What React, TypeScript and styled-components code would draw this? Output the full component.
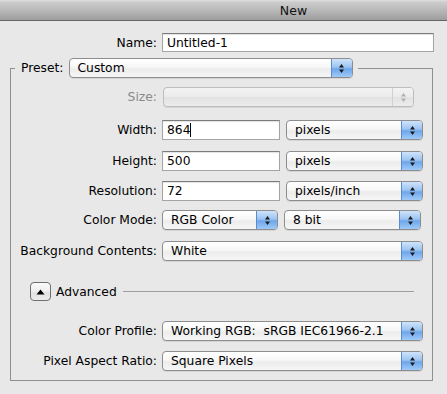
import React from 'react';
import styled, { createGlobalStyle } from 'styled-components';

const GlobalStyle = createGlobalStyle`
    html, body {
        margin: 0;
        padding: 0;
        background: #e8e8e8;
    }
    body {
        font-family: 'DejaVu Sans', 'Liberation Sans', sans-serif;
        font-size: 12.3px;
        color: #000;
    }
`;

const Dialog = styled.div`
    width: 447px;
    height: 394px;
    background: #e8e8e8;
    overflow: hidden;
`;

const TitleBar = styled.div`
    height: 21px;
    border-bottom: 1px solid #666;
    background: linear-gradient(to bottom, #e0e0e0 0px, #cdcdcd 2px, #b4b4b4 60%, #9d9d9d 100%);
    display: flex;
    align-items: center;
    justify-content: center;
    padding-left: 140px;
    box-sizing: border-box;
    font-size: 12.5px;
    color: #111;
`;

const Row = styled.div<{ $mt: number }>`
    display: flex;
    align-items: center;
    height: 20px;
    margin-top: ${p => p.$mt}px;
`;

const Label = styled.div<{ $w: number; $disabled?: boolean }>`
    width: ${p => p.$w}px;
    margin-right: 5px;
    text-align: right;
    white-space: nowrap;
    color: ${p => (p.$disabled ? '#8a8a8a' : '#000')};
`;

const TextField = styled.div<{ $w: number }>`
    width: ${p => p.$w}px;
    height: 20px;
    box-sizing: border-box;
    background: #fff;
    border: 1px solid #a4a4a4;
    border-top-color: #7c7c7c;
    box-shadow: inset 0 1px 1px rgba(0, 0, 0, 0.12);
    padding-left: 4px;
    display: flex;
    align-items: center;
`;

const Caret = styled.span`
    display: inline-block;
    width: 1px;
    height: 14px;
    background: #000;
`;

const Popup = styled.div<{ $w: number; $disabled?: boolean }>`
    width: ${p => p.$w}px;
    height: 20px;
    box-sizing: border-box;
    display: flex;
    border: 1px solid ${p => (p.$disabled ? '#bdbdbd' : '#8d8d8d')};
    border-radius: 4px;
    background: ${p =>
        p.$disabled
            ? 'linear-gradient(to bottom, #f3f3f3, #ebebeb 50%, #e2e2e2 51%, #ececec)'
            : 'linear-gradient(to bottom, #ffffff, #f7f7f7 45%, #ececec 55%, #f6f6f6)'};
    box-shadow: 0 1px 0 rgba(0, 0, 0, 0.08);
    overflow: hidden;
    margin-left: ${p => (p.$disabled ? 1 : 0)}px;
`;

const PopupText = styled.div`
    flex: 1;
    padding-left: 8px;
    display: flex;
    align-items: center;
    white-space: pre;
    overflow: hidden;
`;

const Stepper = styled.div<{ $disabled?: boolean }>`
    width: 20px;
    display: flex;
    align-items: center;
    justify-content: center;
    border-left: 1px solid ${p => (p.$disabled ? '#d0d0d0' : '#5d8bd0')};
    background: ${p =>
        p.$disabled
            ? 'linear-gradient(to bottom, #f3f3f3, #ebebeb 50%, #e2e2e2 51%, #ececec)'
            : 'linear-gradient(to bottom, #cfe3fa, #9cc4f2 45%, #6ea6ea 55%, #9fcaf8)'};
`;

const Fieldset = styled.fieldset`
    margin: 6px 14px 0 10px;
    padding: 0;
    border: 1px solid #8f8f8f;
    min-width: 0;
`;

const Legend = styled.legend`
    margin-left: 4px;
    padding: 0 5px 0 6px;
    display: flex;
    align-items: center;
    height: 20px;
`;

const LegendLabel = styled.span`
    margin-right: 5px;
`;

const FieldsetBody = styled.div`
    padding: 9px 9px 9px 0;
`;

const Pair = styled.div`
    display: flex;
    gap: 6px;
`;

const DisclosureButton = styled.div`
    width: 21px;
    height: 19px;
    box-sizing: border-box;
    margin-left: 19px;
    border: 1px solid #6f6f6f;
    border-radius: 4px;
    background: linear-gradient(to bottom, #fbfbfb, #eeeeee 50%, #e0e0e0 51%, #ececec);
    display: flex;
    align-items: center;
    justify-content: center;
`;

const AdvancedText = styled.span`
    margin-left: 5px;
`;

const Rule = styled.div`
    flex: 1;
    height: 1px;
    background: #9d9d9d;
    margin: 0 9px 0 6px;
`;

const Arrows = ({ disabled }: { disabled?: boolean }) => (
    <svg width="7" height="11" viewBox="0 0 7 11">
        <path d="M3.5 1 L6 4.5 L1 4.5 Z" fill={disabled ? '#b0b0b0' : '#1a1a1a'} />
        <path d="M3.5 10 L6 6.5 L1 6.5 Z" fill={disabled ? '#b0b0b0' : '#1a1a1a'} />
    </svg>
);

const PopupButton = ({ w, text, disabled }: { w: number; text?: string; disabled?: boolean }) => (
    <Popup $w={w} $disabled={disabled}>
        <PopupText>{text}</PopupText>
        <Stepper $disabled={disabled}>
            <Arrows disabled={disabled} />
        </Stepper>
    </Popup>
);

const App = () => {
    return (
        <Dialog>
            <GlobalStyle />
            <TitleBar>New</TitleBar>
            <Row $mt={12} style={{ height: 19 }}>
                <Label $w={157}>Name:</Label>
                <TextField $w={272} style={{ height: 19 }}>Untitled-1</TextField>
            </Row>
            <Fieldset>
                <Legend>
                    <LegendLabel>Preset:</LegendLabel>
                    <PopupButton w={284} text="Custom" />
                </Legend>
                <FieldsetBody>
                    <Row $mt={0}>
                        <Label $w={146} $disabled>
                            Size:
                        </Label>
                        <PopupButton w={251} disabled />
                    </Row>
                    <Row $mt={13}>
                        <Label $w={146}>Width:</Label>
                        <Pair>
                            <TextField $w={118}>
                                864
                                <Caret />
                            </TextField>
                            <PopupButton w={137} text="pixels" />
                        </Pair>
                    </Row>
                    <Row $mt={11}>
                        <Label $w={146}>Height:</Label>
                        <Pair>
                            <TextField $w={118}>500</TextField>
                            <PopupButton w={137} text="pixels" />
                        </Pair>
                    </Row>
                    <Row $mt={10}>
                        <Label $w={146}>Resolution:</Label>
                        <Pair>
                            <TextField $w={118}>72</TextField>
                            <PopupButton w={137} text="pixels/inch" />
                        </Pair>
                    </Row>
                    <Row $mt={9}>
                        <Label $w={146}>Color Mode:</Label>
                        <Pair>
                            <PopupButton w={116} text="RGB Color" />
                            <PopupButton w={137} text="8 bit" />
                        </Pair>
                    </Row>
                    <Row $mt={11}>
                        <Label $w={146}>Background Contents:</Label>
                        <PopupButton w={261} text="White" />
                    </Row>
                    <Row $mt={21} style={{ height: 19 }}>
                        <DisclosureButton>
                            <svg width="9" height="6" viewBox="0 0 9 6">
                                <path d="M4.5 0.5 L8.5 5.5 L0.5 5.5 Z" fill="#000" />
                            </svg>
                        </DisclosureButton>
                        <AdvancedText>Advanced</AdvancedText>
                        <Rule />
                    </Row>
                    <Row $mt={20}>
                        <Label $w={146}>Color Profile:</Label>
                        <PopupButton w={261} text="Working RGB:  sRGB IEC61966-2.1" />
                    </Row>
                    <Row $mt={10}>
                        <Label $w={146}>Pixel Aspect Ratio:</Label>
                        <PopupButton w={261} text="Square Pixels" />
                    </Row>
                </FieldsetBody>
            </Fieldset>
        </Dialog>
    );
};

export default App;
